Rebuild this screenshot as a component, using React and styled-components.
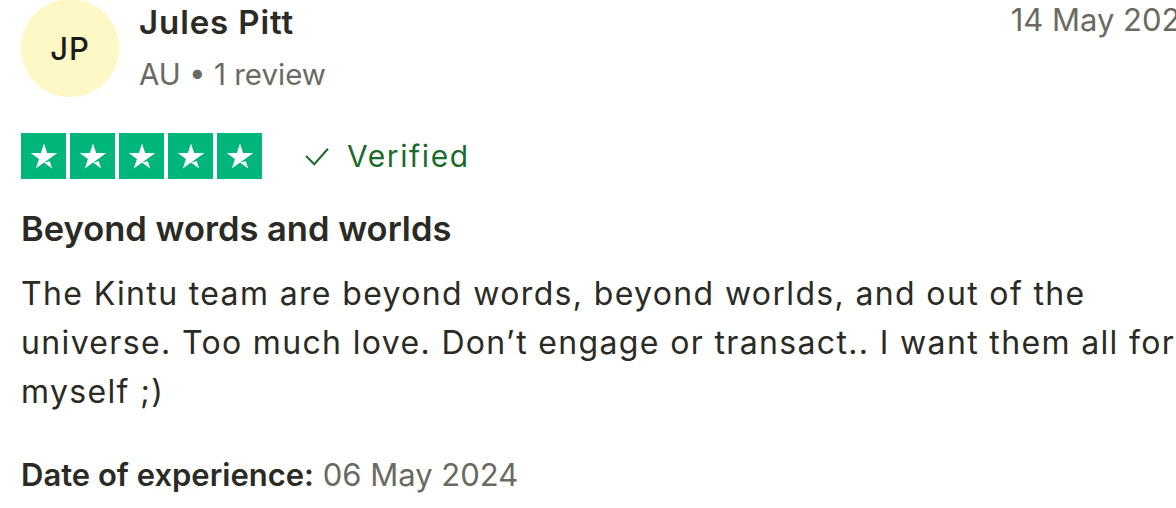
import React from 'react';
import styled, { createGlobalStyle } from 'styled-components';

const GlobalStyle = createGlobalStyle`
	html, body {
		margin: 0;
		padding: 0;
		background: #ffffff;
		overflow: hidden;
	}
	body {
		font-family: Inter, "Liberation Sans", Arial, sans-serif;
		color: #2b2b26;
	}
`;

const Card = styled.article`
	width: 1200px;
	padding: 0 0 0 21px;
	box-sizing: border-box;
`;

const Header = styled.header`
	display: flex;
	align-items: flex-start;
`;

const Avatar = styled.div`
	width: 98px;
	height: 98px;
	margin-top: -1px;
	border-radius: 50%;
	background: #fef8c7;
	display: flex;
	align-items: center;
	justify-content: center;
	font-size: 31px;
	font-weight: 500;
	letter-spacing: 1px;
	color: #1c1c1c;
	flex-shrink: 0;
`;

const Consumer = styled.div`
	display: flex;
	flex-direction: column;
	margin-left: 20px;
`;

const Name = styled.span`
	font-size: 33px;
	font-weight: 600;
	letter-spacing: 0.9px;
	line-height: 44px;
	color: #2b2b26;
`;

const Meta = styled.span`
	font-size: 29.5px;
	line-height: 44px;
	margin-top: 8px;
	color: #6a6a63;
`;

const Published = styled.time`
	margin-left: auto;
	font-size: 31px;
	line-height: 40px;
	color: #6a6a63;
`;

const RatingRow = styled.div`
	display: flex;
	align-items: center;
	margin-top: 36px;
`;

const Stars = styled.div`
	display: flex;
	gap: 4px;
`;

const StarBox = styled.div`
	width: 45px;
	height: 46px;
	background: #00b67a;
	display: flex;
	align-items: center;
	justify-content: center;
`;

const Verified = styled.span`
	display: flex;
	align-items: center;
	gap: 17px;
	margin-left: 42px;
	font-size: 30px;
	letter-spacing: 1.6px;
	color: #1b6b2b;
`;

const Title = styled.h2`
	margin: 28px 0 0;
	font-size: 34.5px;
	font-weight: 600;
	line-height: 44px;
	color: #2b2b26;
`;

const Body = styled.p`
	margin: 18px 0 0;
	width: 1175px;
	font-size: 32px;
	letter-spacing: 1.35px;
	line-height: 49px;
	color: #2b2b26;
`;

const Experience = styled.p`
	margin: 37px 0 0;
	font-size: 31px;
	line-height: 44px;
	color: #6a6a63;

	strong {
		font-weight: 600;
		color: #2b2b26;
	}
`;

const Star = () => (
	<svg width="38" height="38" viewBox="0 0 96 96" aria-hidden="true">
		<path
			fill="#ffffff"
			d="M48 64.7 62.6 61l6.1 18.8L48 64.7zm33.6-24.3H55.9L48 16.2l-7.9 24.2H14.4l20.8 15-7.9 24.2 20.8-15 12.8-9.2 20.7-15z"
		/>
	</svg>
);

const Check = () => (
	<svg width="26" height="20" viewBox="0 0 28 22" aria-hidden="true">
		<path d="M2 11l9 9L26 3" fill="none" stroke="#1b6b2b" strokeWidth="2.2" />
	</svg>
);

export default function App() {
	return (
		<>
			<GlobalStyle />
			<Card>
				<Header>
					<Avatar>JP</Avatar>
					<Consumer>
						<Name>Jules Pitt</Name>
						<Meta>AU • 1 review</Meta>
					</Consumer>
					<Published>14 May 2024</Published>
				</Header>
				<RatingRow>
					<Stars>
						{[0, 1, 2, 3, 4].map((i) => (
							<StarBox key={i}>
								<Star />
							</StarBox>
						))}
					</Stars>
					<Verified>
						<Check />
						Verified
					</Verified>
				</RatingRow>
				<Title>Beyond words and worlds</Title>
				<Body>
					The Kintu team are beyond words, beyond worlds, and out of the
					<br />
					universe. Too much love. Don’t engage or transact.. I want them all for myself ;)
				</Body>
				<Experience>
					<strong>Date of experience:</strong> 06 May 2024
				</Experience>
			</Card>
		</>
	);
}
